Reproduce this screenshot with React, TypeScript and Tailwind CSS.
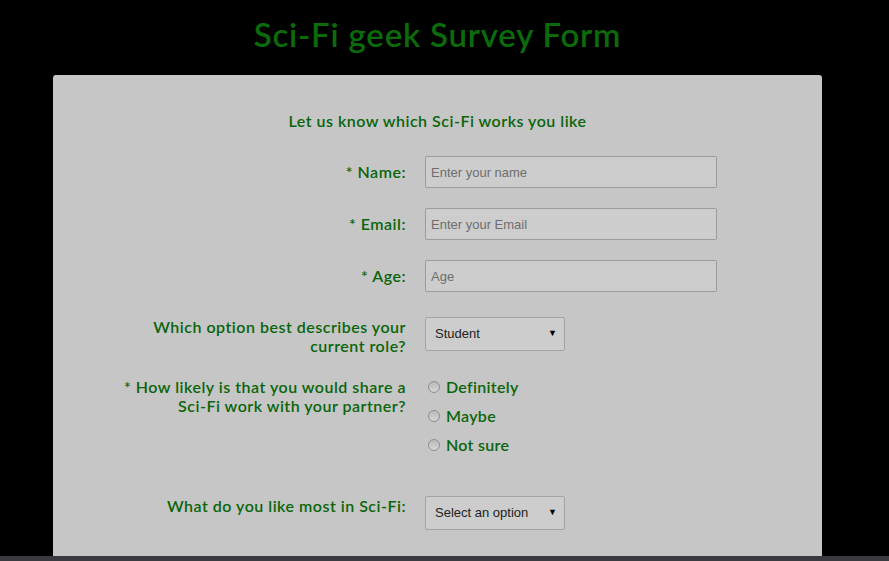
import React from 'react';

const labelFont = { fontFamily: '"Lato", "Open Sans", sans-serif' };

function Field({ label, placeholder }: { label: string; placeholder: string }) {
  return (
    <div className="flex items-center">
      <label className="w-[352px] pr-[19px] text-right text-[16px] font-semibold tracking-[0.5px] text-[#0a650a]" style={labelFont}>
        {label}
      </label>
      <input
        placeholder={placeholder}
        className="h-[32px] w-[292px] rounded-[2px] border border-[#9c9c9c] bg-[#cdcdcd] px-[5px] text-[13px] text-[#333] placeholder:text-[#6d6d6d] outline-none"
        style={{ fontFamily: '"Liberation Sans", Arial, sans-serif' }}
      />
    </div>
  );
}

function FakeSelect({ value }: { value: string }) {
  return (
    <div
      className="flex h-[34px] w-[140px] items-center justify-between rounded-[2px] border border-[#a3a3a3] bg-[#cdcdcd] pl-[9px] pr-[7px] text-[13px] text-[#222]"
      style={{ fontFamily: '"Liberation Sans", Arial, sans-serif' }}
    >
      <span>{value}</span>
      <span className="text-[9px] text-black">▼</span>
    </div>
  );
}

function Radio({ text }: { text: string }) {
  return (
    <div className="flex h-[29px] items-center">
      <span className="ml-[3px] mr-[6px] h-[12px] w-[12px] rounded-full border border-[#8f8f8f] bg-gradient-to-b from-[#b9b9b9] to-[#d6d6d6]" />
      <span className="text-[16px] font-semibold tracking-[0.3px] text-[#0a650a]" style={labelFont}>{text}</span>
    </div>
  );
}

export default function App() {
  return (
    <div className="relative h-[561px] overflow-hidden bg-black">
      <div className="w-[875px]">
        <h1
          className="flex h-[75px] items-center justify-center pb-[6px] text-[33px] font-semibold tracking-[0.8px] text-[#0b6b0b]"
          style={labelFont}
        >
          Sci-Fi geek Survey Form
        </h1>
        <div className="mx-auto min-h-[600px] w-[769px] rounded-t-[3px] bg-[#c6c6c6] pl-[20px] pt-[36px]">
          <p className="pr-[20px] text-center text-[16px] font-semibold leading-[19px] tracking-[0.5px] text-[#0a650a]" style={labelFont}>
            Let us know which Sci-Fi works you like
          </p>
          <div className="mt-[26px] flex flex-col gap-[20px]">
            <Field label="* Name:" placeholder="Enter your name" />
            <Field label="* Email:" placeholder="Enter your Email" />
            <Field label="* Age:" placeholder="Age" />
          </div>
          <div className="mt-[25px] flex items-start">
            <label className="w-[352px] pr-[19px] text-right text-[16px] font-semibold leading-[19px] tracking-[0.5px] text-[#0a650a]" style={labelFont}>
              Which option best describes your
              <br />
              current role?
            </label>
            <FakeSelect value="Student" />
          </div>
          <div className="mt-[17px] flex items-start">
            <label className="w-[352px] pr-[19px] pt-[5px] text-right text-[16px] font-semibold leading-[19px] tracking-[0.5px] text-[#0a650a]" style={labelFont}>
              * How likely is that you would share a
              <br />
              Sci-Fi work with your partner?
            </label>
            <div className="flex flex-col">
              <Radio text="Definitely" />
              <Radio text="Maybe" />
              <Radio text="Not sure" />
            </div>
          </div>
          <div className="mt-[37px] flex items-start">
            <label className="w-[352px] pr-[19px] text-right text-[16px] font-semibold leading-[19px] tracking-[0.5px] text-[#0a650a]" style={labelFont}>
              What do you like most in Sci-Fi:
            </label>
            <FakeSelect value="Select an option" />
          </div>
        </div>
      </div>
      <div className="absolute bottom-0 left-0 h-[5px] w-full bg-[#3a3b40]" />
    </div>
  );
}
